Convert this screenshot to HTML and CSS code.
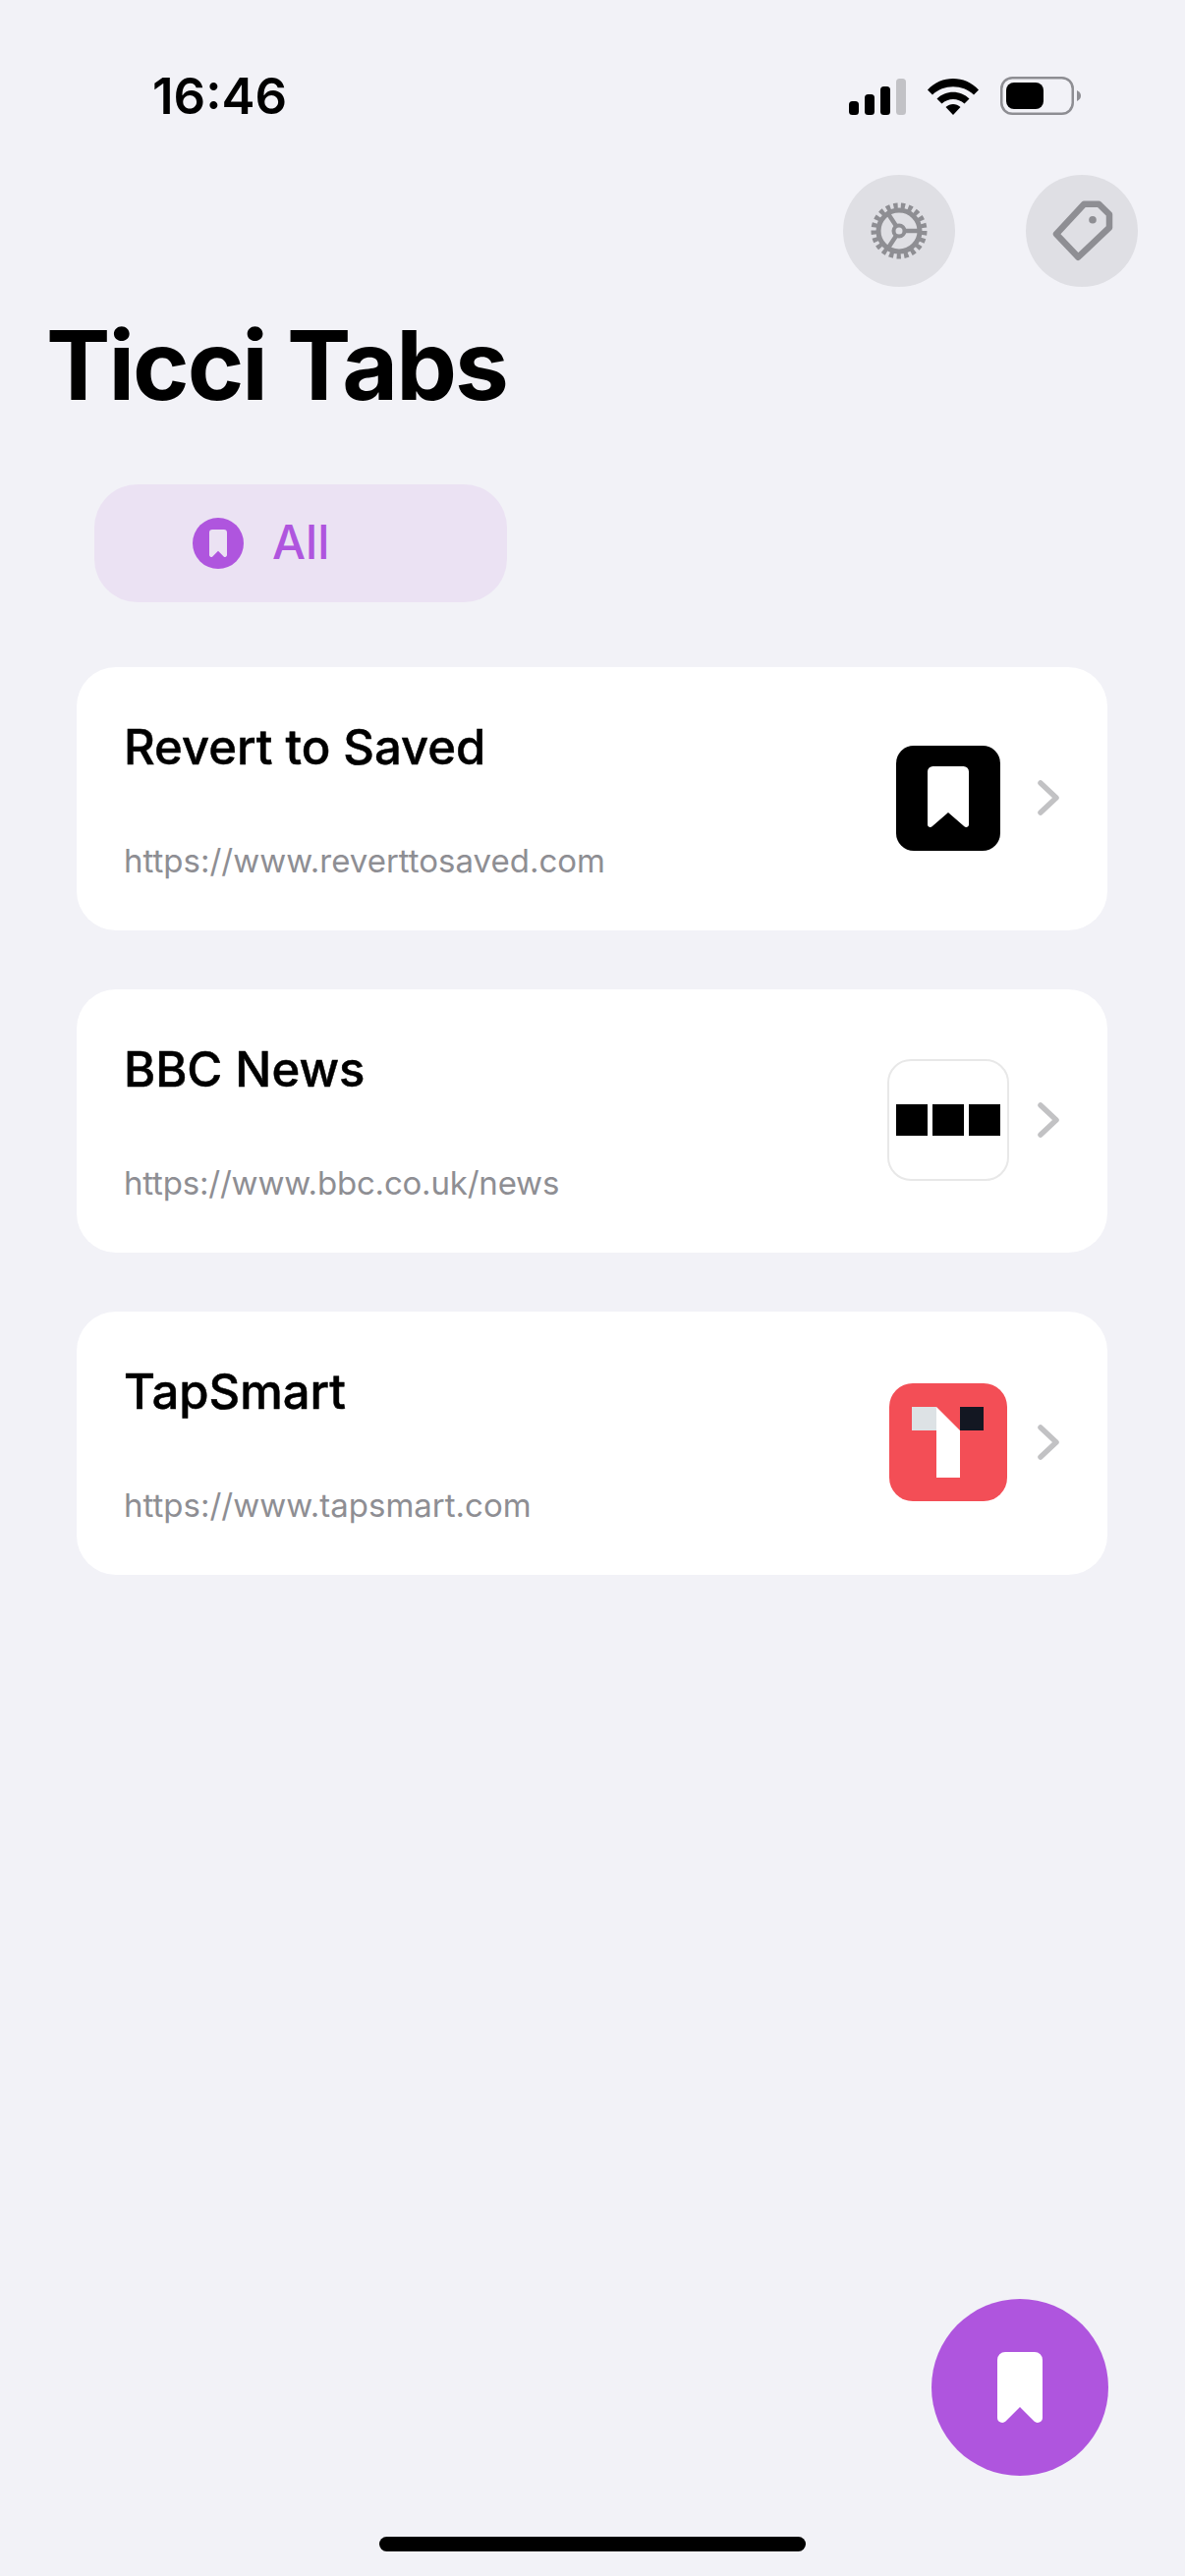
FILE: index.html
```html
<!DOCTYPE html>
<html lang="en">
<head>
    <meta charset="UTF-8">
    <meta name="viewport" content="width=device-width, initial-scale=1.0">
    <title>Ticci Tabs</title>
    <link rel="stylesheet" href="styles.css">
</head>
<body>
    <div class="screen">
        <div class="status-bar">
            <span class="time">16:46</span>
            <div class="status-icons">
                <svg width="58" height="37" viewBox="0 0 58 37">
                    <rect x="0" y="23" width="10" height="14" rx="3.5" fill="#000"/>
                    <rect x="16" y="16" width="10" height="21" rx="3.5" fill="#000"/>
                    <rect x="32" y="8" width="10" height="29" rx="3.5" fill="#000"/>
                    <rect x="48" y="0" width="10" height="37" rx="3.5" fill="#c2c2c6"/>
                </svg>
                <svg width="52" height="37" viewBox="0 0 52 37">
                    <path d="M0 11.5 C14 -3.8 38 -3.8 52 11.5 L47 16.5 C36 5.5 16 5.5 5 16.5 Z" fill="#000"/>
                    <path d="M9.5 20.5 C18.5 11.5 33.5 11.5 42.5 20.5 L37.5 25.5 C31 19.5 21 19.5 14.5 25.5 Z" fill="#000"/>
                    <path d="M18.5 29 C23 25 29 25 33.5 29 L26 37 Z" fill="#000"/>
                </svg>
                <svg width="82" height="39" viewBox="0 0 82 39">
                    <rect x="1.25" y="1.25" width="72.5" height="36.5" rx="11" fill="none" stroke="#8e8e93" stroke-width="2.5"/>
                    <rect x="6" y="6" width="38" height="27" rx="8" fill="#000"/>
                    <path d="M78 14 C81 15.5 82 17.5 82 19.5 C82 21.5 81 23.5 78 25 Z" fill="#8e8e93"/>
                </svg>
            </div>
        </div>

        <div class="top-actions">
            <button class="round-btn">
                <svg width="60" height="60" viewBox="0 0 60 60">
                    <circle cx="30" cy="30" r="25.5" fill="none" stroke="#8e8e93" stroke-width="6" pathLength="63" stroke-dasharray="1.7 1.3"/>
                    <circle cx="30" cy="30" r="21" fill="none" stroke="#8e8e93" stroke-width="5"/>
                    <circle cx="30" cy="30" r="5.5" fill="none" stroke="#8e8e93" stroke-width="4"/>
                    <path d="M35.5 30 H50 M27.2 34.8 L18.5 48 M27.2 25.2 L18.5 12" stroke="#8e8e93" stroke-width="4.5" fill="none"/>
                </svg>
            </button>
            <button class="round-btn">
                <svg width="114" height="114" viewBox="0 0 114 114">
                    <path d="M59.3 29.7 H74.3 L85 40.3 V53.7 L53.3 83.7 L31 60.3 Z" fill="none" stroke="#8e8e93" stroke-width="6.5" stroke-linejoin="round"/>
                    <circle cx="68" cy="45.7" r="3.8" fill="#8e8e93"/>
                </svg>
            </button>
        </div>

        <h1 class="page-title">Ticci Tabs</h1>

        <div class="filter-row">
            <div class="filter-chip">
                <span class="chip-icon">
                    <svg width="18" height="28" viewBox="0 0 46 72" preserveAspectRatio="none">
                        <path d="M0 8 a8 8 0 0 1 8-8 h30 a8 8 0 0 1 8 8 v59 a5 5 0 0 1-8.5 3.5 L23 56 L8.5 70.5 A5 5 0 0 1 0 67 Z" fill="#ebe2f3"/>
                    </svg>
                </span>
                <span class="chip-label">All</span>
            </div>
        </div>

        <div class="tab-list">
            <div class="tab-card">
                <div class="tab-text">
                    <div class="tab-title">Revert to Saved</div>
                    <div class="tab-url">https://www.reverttosaved.com</div>
                </div>
                <div class="thumb-slot">
                    <div class="thumb thumb-rts">
                        <svg width="42" height="64" viewBox="0 0 46 72" preserveAspectRatio="none">
                            <path d="M0 6 a6 6 0 0 1 6-6 h34 a6 6 0 0 1 6 6 v61 a3 3 0 0 1-5 2 L23 53 L5 69 A3 3 0 0 1 0 67 Z" fill="#fff"/>
                        </svg>
                    </div>
                </div>
                <svg class="chevron" width="22" height="36" viewBox="0 0 22 36">
                    <path d="M3 3 L19 18 L3 33" fill="none" stroke="#c2c2c4" stroke-width="5.5" stroke-linecap="round" stroke-linejoin="round"/>
                </svg>
            </div>

            <div class="tab-card">
                <div class="tab-text">
                    <div class="tab-title">BBC News</div>
                    <div class="tab-url tab-url-tight">https://www.bbc.co.uk/news</div>
                </div>
                <div class="thumb-slot">
                    <div class="thumb thumb-bbc">
                        <span class="bbc-block"></span>
                        <span class="bbc-block"></span>
                        <span class="bbc-block"></span>
                    </div>
                </div>
                <svg class="chevron" width="22" height="36" viewBox="0 0 22 36">
                    <path d="M3 3 L19 18 L3 33" fill="none" stroke="#c2c2c4" stroke-width="5.5" stroke-linecap="round" stroke-linejoin="round"/>
                </svg>
            </div>

            <div class="tab-card">
                <div class="tab-text">
                    <div class="tab-title">TapSmart</div>
                    <div class="tab-url">https://www.tapsmart.com</div>
                </div>
                <div class="thumb-slot">
                    <div class="thumb thumb-tap">
                        <svg width="120" height="120" viewBox="0 0 120 120">
                            <rect x="23" y="24" width="25" height="24" fill="#dde2e5"/>
                            <path d="M48 24 L72 48 V96 H48 Z" fill="#fff"/>
                            <rect x="72" y="24" width="24" height="24" fill="#131722"/>
                        </svg>
                    </div>
                </div>
                <svg class="chevron" width="22" height="36" viewBox="0 0 22 36">
                    <path d="M3 3 L19 18 L3 33" fill="none" stroke="#c2c2c4" stroke-width="5.5" stroke-linecap="round" stroke-linejoin="round"/>
                </svg>
            </div>
        </div>

        <button class="fab">
            <svg width="46" height="72" viewBox="0 0 46 72">
                <path d="M0 8 a8 8 0 0 1 8-8 h30 a8 8 0 0 1 8 8 v59 a5 5 0 0 1-8.5 3.5 L23 56 L8.5 70.5 A5 5 0 0 1 0 67 Z" fill="#fff"/>
            </svg>
        </button>
        <div class="home-indicator"></div>
    </div>
</body>
</html>
```

FILE: styles.css
```css
:root {
    --bg-color: #f2f2f7;
    --purple: #af55de;
    --grey-icon: #8e8e93;
}

* {
    box-sizing: border-box;
}

body {
    margin: 0;
    background-color: var(--bg-color);
    font-family: 'Inter', 'Liberation Sans', sans-serif;
    color: #000;
}

.screen {
    position: relative;
    width: 1206px;
    height: 2622px;
    overflow: hidden;
}

.status-bar {
    display: flex;
    justify-content: space-between;
    align-items: center;
    height: 39px;
    margin-top: 78px;
    padding: 0 106px 0 155px;
}

.time {
    font-size: 51px;
    font-weight: 600;
    line-height: 39px;
}

.status-icons {
    display: flex;
    align-items: flex-end;
    gap: 22px;
}

.top-actions {
    display: flex;
    justify-content: flex-end;
    gap: 72px;
    margin-top: 61px;
    padding-right: 48px;
}

.round-btn {
    display: flex;
    align-items: center;
    justify-content: center;
    width: 114px;
    height: 114px;
    padding: 0;
    border: none;
    border-radius: 50%;
    background-color: #dfdfe4;
}

.page-title {
    margin: 21px 0 0 47px;
    font-size: 98px;
    font-weight: 700;
    line-height: 118px;
    letter-spacing: -2px;
}

.filter-row {
    display: flex;
    margin-top: 62px;
    padding-left: 96px;
}

.filter-chip {
    display: flex;
    align-items: center;
    gap: 29px;
    width: 420px;
    height: 120px;
    padding-left: 100px;
    border-radius: 44px;
    background-color: #ebe2f3;
    color: var(--purple);
    font-size: 48px;
    font-weight: 500;
}

.chip-label {
    padding-bottom: 3px;
}

.chip-icon {
    display: flex;
    align-items: center;
    justify-content: center;
    width: 52px;
    height: 52px;
    border-radius: 50%;
    background-color: var(--purple);
}

.tab-list {
    display: flex;
    flex-direction: column;
    gap: 60px;
    margin-top: 66px;
    padding: 0 79px 0 78px;
}

.tab-card {
    display: flex;
    align-items: center;
    height: 268px;
    padding-right: 49px;
    padding-bottom: 2px;
    border-radius: 40px;
    background-color: #fff;
}

.tab-text {
    display: flex;
    flex: 1;
    flex-direction: column;
    justify-content: space-between;
    height: 100%;
    padding: 52px 0 49px 48px;
}

.tab-title {
    font-size: 49px;
    font-weight: 500;
    line-height: 60px;
    -webkit-text-stroke: 0.5px #000;
}

.tab-url {
    font-size: 33px;
    line-height: 40px;
    color: var(--grey-icon);
}

.tab-url-tight {
    letter-spacing: -0.2px;
}

.thumb-slot {
    display: flex;
    justify-content: center;
    width: 120px;
    margin-right: 31px;
}

.thumb {
    display: flex;
    flex-shrink: 0;
    align-items: center;
    justify-content: center;
    overflow: hidden;
}

.thumb-rts {
    width: 106px;
    height: 107px;
    border-radius: 18px;
    background-color: #000;
}

.thumb-bbc {
    gap: 5px;
    width: 124px;
    height: 124px;
    border: 2px solid #e8e8e8;
    border-radius: 24px;
    background-color: #fff;
}

.bbc-block {
    width: 32px;
    height: 32px;
    background-color: #000;
}

.thumb-tap {
    width: 120px;
    height: 120px;
    border-radius: 24px;
    background-color: #f34e56;
}

.fab {
    position: absolute;
    left: 948px;
    top: 2340px;
    display: flex;
    align-items: center;
    justify-content: center;
    width: 180px;
    height: 180px;
    padding: 0;
    border: none;
    border-radius: 50%;
    background-color: var(--purple);
}

.home-indicator {
    position: absolute;
    left: 386px;
    top: 2582px;
    width: 434px;
    height: 15px;
    border-radius: 8px;
    background-color: #000;
}
```
